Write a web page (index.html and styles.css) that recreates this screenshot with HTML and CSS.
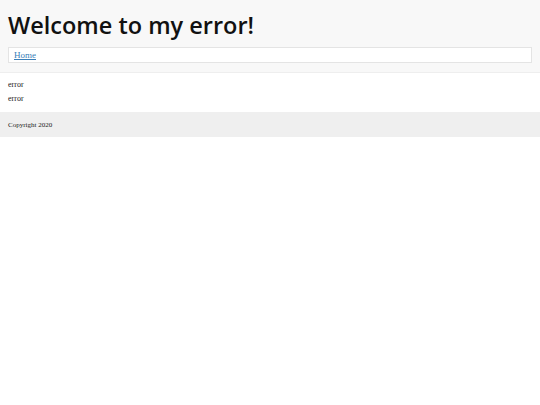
FILE: index.html
```
<!DOCTYPE html>
<html>
<head>
<meta charset="utf-8">
<link rel="stylesheet" href="styles.css">
</head>
<body>
<header class="header">
  <h1 class="title">Welcome to my error!</h1>
  <nav class="nav"><a class="nav-link" href="#">Home</a></nav>
</header>
<main class="content">
  <p class="line">error</p>
  <p class="line">error</p>
</main>
<footer class="footer">Copyright 2020</footer>
</body>
</html>
```
FILE: styles.css
```
html, body { margin: 0; padding: 0; background: #fff; }
body { font-family: "Liberation Serif", "DejaVu Serif", serif; font-size: 8px; color: #222; }
.header { background: #f8f8f8; padding: 10px 8px 9px; border-bottom: 1px solid #eeeeee; }
.title { margin: 0 0 6px; font-family: "Open Sans", sans-serif; font-weight: 600; font-size: 23.5px; line-height: 31px; color: #111; }
.nav { background: #fff; border: 1px solid #e4e4e4; height: 14px; padding: 0 5px; display: flex; align-items: center; }
.nav-link { color: #3b7fb8; font-size: 9px; text-decoration: underline; }
.content { padding: 5px 8px 6px; }
.line { margin: 0; line-height: 14px; }
.footer { background: #efefef; padding: 0 8px; height: 25px; display: flex; align-items: center; font-size: 7px; }
```
